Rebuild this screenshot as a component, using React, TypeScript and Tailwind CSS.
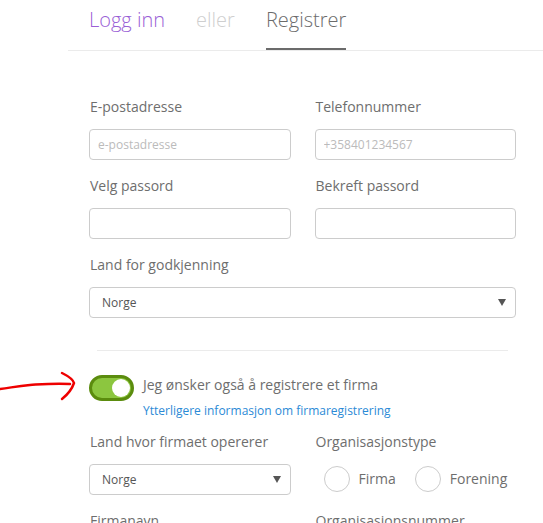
import React from 'react'

function Field({ label, placeholder }: { label: string; placeholder?: string }) {
  return (
    <div className="mb-4">
      <div className="pl-px text-[14px] leading-[20px] text-[#6e6e6e]">{label}</div>
      <input
        readOnly
        placeholder={placeholder}
        className="mt-3 block h-[31px] w-full rounded-[4px] border border-[#ccc] bg-white px-[8px] text-[12px] text-[#555] outline-none placeholder:text-[#bbb]"
      />
    </div>
  )
}

function SelectBox({ value }: { value: string }) {
  return (
    <div className="mt-3 flex h-[31px] w-full items-center justify-between rounded-[4px] border border-[#ccc] bg-white pl-[12px] pr-[8px]">
      <span className="text-[12px] text-[#555]">{value}</span>
      <svg width="8" height="7" viewBox="0 0 8 7" className="mr-px">
        <path d="M0 0 H8 L4 7 Z" fill="#555" />
      </svg>
    </div>
  )
}

function Label({ children }: { children: React.ReactNode }) {
  return <div className="pl-px text-[14px] leading-[20px] text-[#6e6e6e]">{children}</div>
}

function Radio({ label }: { label: string }) {
  return (
    <div className="flex items-center gap-[9px]">
      <span className="h-[26px] w-[26px] rounded-full border border-[#ccc] bg-white" />
      <span className="text-[14px] text-[#6e6e6e]">{label}</span>
    </div>
  )
}

export default function App() {
  return (
    <div className="relative h-[523px] w-[543px] overflow-hidden bg-white font-['Open_Sans',sans-serif]">
      <div className="ml-[68px] flex h-[51px] border-b border-[#ebebeb] font-light">
        <div className="ml-[21px] pt-[6px] text-[20px] leading-[28px] text-[#9a5fd6]">Logg inn</div>
        <div className="ml-[31px] pt-[6px] text-[20px] leading-[28px] text-[#cfcfcf]">eller</div>
        <div className="ml-[31px] h-[50px] border-b-2 border-[#6b6b6b] pt-[6px] text-[20px] leading-[28px] text-[#6b6b6b]">
          Registrer
        </div>
      </div>

      <div className="ml-[89px] w-[427px] pt-[46px]">
        <div className="grid grid-cols-2 gap-x-[24px]">
          <Field label="E-postadresse" placeholder="e-postadresse" />
          <Field label="Telefonnummer" placeholder="+358401234567" />
          <Field label="Velg passord" />
          <Field label="Bekreft passord" />
        </div>
        <div>
          <Label>Land for godkjenning</Label>
          <SelectBox value="Norge" />
        </div>

        <div className="mx-2 mt-8 border-t border-[#ebebeb]" />

        <div className="mt-[24px] flex items-start">
          <div className="flex h-[26px] w-[45px] items-center justify-end rounded-full border-[3px] border-[#5b8c0e] bg-[#8cc63f] pr-px">
            <span className="h-[18px] w-[18px] rounded-full bg-white" />
          </div>
          <div className="ml-[9px]">
            <div className="text-[14px] leading-[20px] text-[#6e6e6e]">Jeg ønsker også å registrere et firma</div>
            <div className="mt-[8px] text-[12px] leading-[16px] text-[#2b8ad6]">
              Ytterligere informasjon om firmaregistrering
            </div>
          </div>
        </div>

        <div className="mt-[13px] grid grid-cols-2 gap-x-[24px]">
          <div className="mb-4">
            <Label>Land hvor firmaet opererer</Label>
            <SelectBox value="Norge" />
          </div>
          <div className="mb-4">
            <Label>Organisasjonstype</Label>
            <div className="mt-[11px] flex h-[31px] items-center gap-[19px] pl-[9px]">
              <Radio label="Firma" />
              <Radio label="Forening" />
            </div>
          </div>
          <Field label="Firmanavn" />
          <Field label="Organisasjonsnummer" />
        </div>
      </div>

      <svg className="absolute left-0 top-[370px]" width="80" height="32" viewBox="0 0 80 32" fill="none">
        <path d="M0 19 C 10 18, 16 16, 30 15 C 45 14, 55 13, 70 14" stroke="#e00" strokeWidth="2.5" strokeLinecap="round" />
        <path d="M62 3 C 68 6, 73 9, 74 13 C 72 19, 67 25, 62 29" stroke="#e00" strokeWidth="2.5" strokeLinecap="round" />
      </svg>
    </div>
  )
}
